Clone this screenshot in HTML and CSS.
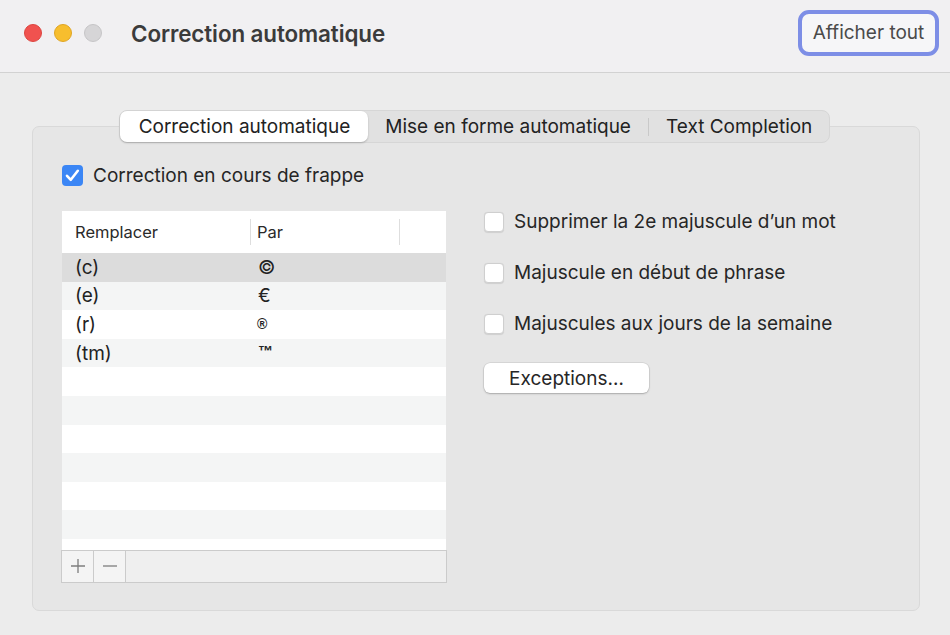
FILE: index.html
```html
<!DOCTYPE html>
<html lang="fr">
<head>
<meta charset="utf-8">
<link rel="stylesheet" href="styles.css">
</head>
<body>
<div class="window">
  <header class="titlebar">
    <div class="lights">
      <span class="light red"></span>
      <span class="light yellow"></span>
      <span class="light grey"></span>
    </div>
    <h1 class="title">Correction automatique</h1>
    <button class="show-all">Afficher tout</button>
  </header>
  <main class="content">
    <div class="tabs">
      <div class="tab active">Correction automatique</div>
      <div class="tab">Mise en forme automatique</div>
      <div class="tab-sep"></div>
      <div class="tab">Text Completion</div>
    </div>
    <section class="group">
      <label class="check main-check">
        <svg class="cb-on" width="21" height="21" viewBox="0 0 21 21"><rect x="0" y="0" width="21" height="21" rx="4" fill="#3b86f5"/><path d="M5 10.8 L8.8 14.8 L15.8 5.8" fill="none" stroke="#fff" stroke-width="2.6" stroke-linecap="round" stroke-linejoin="round"/></svg>
        <span>Correction en cours de frappe</span>
      </label>
      <div class="columns">
        <div class="table-wrap">
          <div class="table">
            <div class="thead">
              <div class="th c1">Remplacer</div>
              <div class="th c2">Par</div>
              <div class="th c3"></div>
            </div>
            <div class="row sel"><span class="c1">(c)</span><span class="c2">©</span></div>
            <div class="row alt"><span class="c1">(e)</span><span class="c2">€</span></div>
            <div class="row"><span class="c1">(r)</span><span class="c2 reg">®</span></div>
            <div class="row alt"><span class="c1">(tm)</span><span class="c2 tm">™</span></div>
            <div class="row"></div>
            <div class="row alt"></div>
            <div class="row"></div>
            <div class="row alt"></div>
            <div class="row"></div>
            <div class="row alt"></div>
            <div class="row last"></div>
          </div>
          <div class="bottombar">
            <button class="pm" aria-label="Ajouter"><svg width="16" height="16" viewBox="0 0 16 16"><path d="M8 1 V15 M1 8 H15" stroke="#7d7d7d" stroke-width="1.3" fill="none"/></svg></button>
            <button class="pm" aria-label="Supprimer"><svg width="16" height="16" viewBox="0 0 16 16"><path d="M1 8 H15" stroke="#7d7d7d" stroke-width="1.3" fill="none"/></svg></button>
          </div>
        </div>
        <div class="options">
          <label class="check opt"><span class="cb-off"></span><span>Supprimer la 2e majuscule d’un mot</span></label>
          <label class="check opt"><span class="cb-off"></span><span>Majuscule en début de phrase</span></label>
          <label class="check opt"><span class="cb-off"></span><span>Majuscules aux jours de la semaine</span></label>
          <button class="exceptions">Exceptions…</button>
        </div>
      </div>
    </section>
  </main>
</div>
</body>
</html>
```
FILE: styles.css
```css
* { box-sizing: border-box; }
html, body { margin: 0; padding: 0; }
body {
  width: 950px;
  height: 635px;
  overflow: hidden;
  font-family: Inter, "Helvetica Neue", "Liberation Sans", sans-serif;
  color: #262626;
  background: #ececec;
}
.window { width: 950px; height: 635px; display: flex; flex-direction: column; }

.titlebar {
  height: 73px;
  flex: none;
  display: flex;
  align-items: center;
  background: #f1f0f2;
  border-bottom: 1px solid #d2d2d2;
  padding: 0 11px 6px 24px;
}
.lights { display: flex; gap: 12px; }
.light { width: 18px; height: 18px; border-radius: 50%; display: block; }
.red { background: #f0524f; border: 1px solid #dd4540; }
.yellow { background: #f7be2e; border: 1px solid #e0a523; }
.grey { background: #d6d5d7; border: 1px solid #c6c5c7; }
.title {
  margin: 0 0 0 29px;
  font-size: 22.4px;
  font-weight: 600;
  color: #3b3b3b;
  letter-spacing: -0.1px;
}
.show-all {
  margin-left: auto;
  margin-top: -1px;
  height: 46px;
  width: 141px;
  border: 4px solid #7d8ee6;
  border-radius: 11px;
  background: #f6f6f8;
  font-family: inherit;
  font-size: 19px;
  color: #4a4a4a;
  padding: 0;
}

.content {
  flex: 1;
  padding: 37px 30px 24px 32px;
  display: flex;
  flex-direction: column;
  align-items: center;
}
.tabs {
  position: relative;
  z-index: 1;
  height: 33px;
  display: flex;
  align-items: center;
  background: #e1e1e1;
  border: 1px solid #d6d6d6;
  border-radius: 8px;
  margin-bottom: -17px;
  margin-right: 3px;
}
.tab {
  height: 31px;
  display: flex;
  align-items: center;
  padding: 0 17px 0 17px;
  font-size: 19px;
  color: #222;
}
.tab.active {
  background: #fff;
  border-radius: 7px;
  box-shadow: 0 1px 2px rgba(0,0,0,0.22);
  padding: 0 18px 0 19px;
}
.tab-sep { width: 1px; height: 18px; background: #c9c9c9; }

.group {
  align-self: stretch;
  flex: 1;
  background: #e6e6e6;
  border: 1px solid #d9d9d9;
  border-radius: 7px;
  padding: 37px 29px 26px 29px;
}
.check { display: flex; align-items: center; font-size: 19px; color: #262626; }
.main-check { gap: 10px; }
.main-check svg { display: block; }

.columns { display: flex; margin-top: 24px; gap: 38px; }
.table-wrap { width: 384px; display: flex; flex-direction: column; }
.table { background: #fff; }
.thead { height: 42px; display: flex; align-items: center; font-size: 16.5px; color: #2a2a2a; }
.th { height: 26px; display: flex; align-items: center; }
.th.c1 { width: 189px; padding-left: 13px; border-right: 1px solid #dedede; }
.th.c2 { width: 149px; padding-left: 6px; border-right: 1px solid #dedede; }
.row { height: 28.6px; display: flex; align-items: center; font-size: 19px; color: #222; }
.row.alt { background: #f4f5f5; }
.row.sel { background: #dcdcdc; }
.row.last { height: 11px; }
.row .c1 { width: 189px; padding-left: 13px; }
.row .c2 { padding-left: 7px; }
.row .c2.reg { font-family: "Liberation Sans", sans-serif; font-size: 14px; font-weight: 700; padding-left: 6px; }
.row .c2.tm { font-family: "Liberation Sans", sans-serif; font-size: 15px; font-weight: 700; align-self: flex-start; padding-top: 3px; }
.bottombar {
  height: 33px;
  display: flex;
  background: #efefef;
  border: 1px solid #cbcbcb;
  margin-left: -1px;
  margin-right: -1px;
}
.pm {
  width: 32px;
  height: 31px;
  border: 0;
  border-right: 1px solid #cbcbcb;
  background: #f4f4f4;
  padding: 0;
  display: flex;
  align-items: center;
  justify-content: center;
}
.pm svg { display: block; }

.options { display: flex; flex-direction: column; padding-top: 0; }
.opt { gap: 10px; height: 21px; margin-bottom: 30px; }
.opt:nth-child(3) { margin-bottom: 29px; }
.cb-off {
  width: 20px; height: 20px;
  border-radius: 4px;
  background: #fff;
  border: 1px solid #cfcfcf;
  box-shadow: 0 0.5px 1px rgba(0,0,0,0.1);
  flex: none;
}
.exceptions {
  margin-top: 0;
  width: 165px;
  height: 30px;
  background: #fff;
  border: 0;
  border-radius: 6px;
  box-shadow: 0 0 0 0.5px rgba(0,0,0,0.12), 0 1px 2px rgba(0,0,0,0.22);
  font-family: inherit;
  font-size: 19px;
  color: #262626;
  padding: 0;
}
```
